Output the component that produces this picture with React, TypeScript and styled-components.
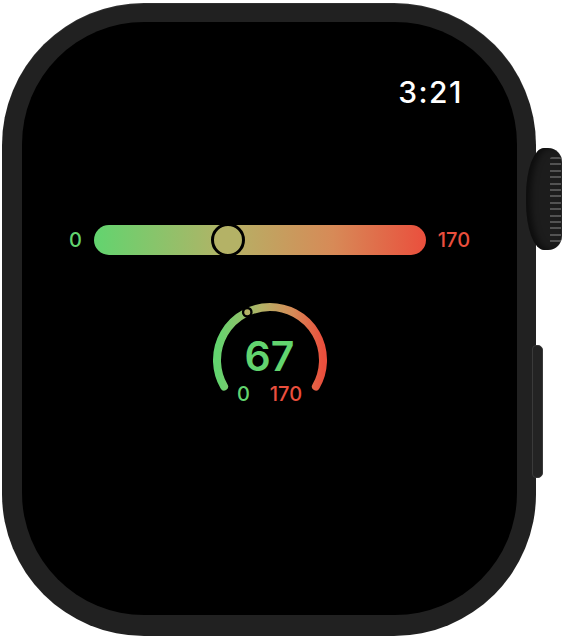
import React from "react";
import styled, { createGlobalStyle } from "styled-components";

const colors = {
  page: "#ffffff",
  bezel: "#212121",
  screen: "#000000",
  crown: "#1c1c1c",
  ridge: "#5c5c5c",
  green: "#62d46f",
  olive: "#b4b266",
  orange: "#d78a57",
  red: "#ea4f3d",
  white: "#ffffff",
};

const MIN = 0;
const MAX = 170;
const VALUE = 67;

const GlobalStyle = createGlobalStyle`
  html, body {
    margin: 0;
    padding: 0;
    background: ${colors.page};
  }
  body {
    font-family: Inter, "Noto Sans", "Liberation Sans", sans-serif;
  }
`;

const Stage = styled.div`
  box-sizing: border-box;
  width: 564px;
  height: 637px;
  padding: 3px 0 0 2px;
`;

const Device = styled.div`
  position: relative;
  width: 534px;
  height: 633px;
`;

const Case = styled.div`
  box-sizing: border-box;
  width: 100%;
  height: 100%;
  padding: 19px 19px 21px 20px;
  background: ${colors.bezel};
  border-radius: 142px;
  box-shadow: inset 0 1px 0 rgba(255, 255, 255, 0.07);
`;

const Screen = styled.div`
  width: 100%;
  height: 100%;
  background: ${colors.screen};
  border-radius: 122px;
  display: flex;
  flex-direction: column;
  align-items: center;
  overflow: hidden;
`;

const Crown = styled.div`
  position: absolute;
  left: 524px;
  top: 145px;
  width: 36px;
  height: 102px;
  background: ${colors.crown};
  border-radius: 18px 14px 14px 18px / 48px 14px 14px 48px;
  box-shadow: inset 5px 0 6px rgba(0, 0, 0, 0.55),
    inset -1px 0 0 rgba(255, 255, 255, 0.05);

  &::after {
    content: "";
    position: absolute;
    right: 1px;
    top: 9px;
    bottom: 5px;
    width: 11px;
    border-radius: 2px;
    background: repeating-linear-gradient(
      to bottom,
      ${colors.ridge} 0 2px,
      transparent 2px 6.4px
    );
    opacity: 0.85;
  }
`;

const SideButton = styled.div`
  position: absolute;
  left: 530px;
  top: 342px;
  box-sizing: border-box;
  width: 11px;
  height: 133px;
  background: #232323;
  border: 1px solid #3a3a3a;
  border-radius: 4px 5px 5px 4px;
`;

const StatusBar = styled.div`
  align-self: stretch;
  display: flex;
  justify-content: flex-end;
  padding: 55px 54px 0 0;
`;

const Clock = styled.span`
  color: ${colors.white};
  font-size: 30px;
  font-weight: 500;
  line-height: 1;
  letter-spacing: 1.5px;
`;

const SliderRow = styled.div`
  margin-top: 116px;
  height: 34px;
  display: flex;
  align-items: center;
  gap: 12px;
`;

const Bound = styled.span<{ $tone: string }>`
  color: ${(p) => p.$tone};
  font-size: 20px;
  font-weight: 500;
  line-height: 1;
`;

const Track = styled.div`
  position: relative;
  width: 332px;
  height: 30px;
  border-radius: 15px;
  background: linear-gradient(
    90deg,
    ${colors.green} 0%,
    ${colors.olive} 40%,
    ${colors.orange} 72%,
    ${colors.red} 100%
  );
`;

const Thumb = styled.div<{ $frac: number }>`
  position: absolute;
  top: 50%;
  left: calc(15px + (100% - 30px) * ${(p) => p.$frac});
  box-sizing: border-box;
  width: 34px;
  height: 34px;
  border: 3px solid #000;
  border-radius: 50%;
  background: ${colors.olive};
  transform: translate(-50%, -50%);
`;

const Gauge = styled.div`
  position: relative;
  margin-top: 43px;
  width: 120px;
  height: 104px;
  display: flex;
  flex-direction: column;
  align-items: center;
`;

const GaugeArt = styled.svg`
  position: absolute;
  inset: 0;
`;

const GaugeValue = styled.span`
  position: relative;
  margin-top: 36px;
  color: ${colors.green};
  font-size: 41px;
  font-weight: 600;
  line-height: 1;
`;

const GaugeBounds = styled.div`
  position: relative;
  margin-top: 7px;
  display: flex;
  gap: 20px;
`;

const CX = 60;
const CY = 60;
const R = 53;

function polar(deg: number) {
  const rad = (deg * Math.PI) / 180;
  return { x: CX + R * Math.cos(rad), y: CY - R * Math.sin(rad) };
}

const GaugeRing: React.FC<{ frac: number }> = ({ frac }) => {
  const start = polar(210);
  const end = polar(-30);
  const dot = polar(210 - frac * 240);
  return (
    <GaugeArt width="120" height="104" viewBox="0 0 120 104">
      <defs>
        <linearGradient id="gaugeGrad" x1="7" y1="0" x2="113" y2="0" gradientUnits="userSpaceOnUse">
          <stop offset="0" stopColor={colors.green} />
          <stop offset="0.42" stopColor={colors.olive} />
          <stop offset="0.72" stopColor={colors.orange} />
          <stop offset="1" stopColor={colors.red} />
        </linearGradient>
      </defs>
      <path
        d={`M ${start.x} ${start.y} A ${R} ${R} 0 1 1 ${end.x} ${end.y}`}
        fill="none"
        stroke="url(#gaugeGrad)"
        strokeWidth="8"
        strokeLinecap="round"
      />
      <circle cx={dot.x} cy={dot.y} r="4.2" fill={colors.olive} stroke="#000" strokeWidth="2.4" />
    </GaugeArt>
  );
};

export default function App() {
  const frac = (VALUE - MIN) / (MAX - MIN);

  return (
    <>
      <GlobalStyle />
      <Stage>
        <Device>
          <Case>
            <Screen>
              <StatusBar>
                <Clock>3:21</Clock>
              </StatusBar>

              <SliderRow>
                <Bound $tone={colors.green}>{MIN}</Bound>
                <Track>
                  <Thumb $frac={frac} />
                </Track>
                <Bound $tone={colors.red}>{MAX}</Bound>
              </SliderRow>

              <Gauge>
                <GaugeRing frac={frac} />
                <GaugeValue>{VALUE}</GaugeValue>
                <GaugeBounds>
                  <Bound $tone={colors.green}>{MIN}</Bound>
                  <Bound $tone={colors.red}>{MAX}</Bound>
                </GaugeBounds>
              </Gauge>
            </Screen>
          </Case>
          <Crown />
          <SideButton />
        </Device>
      </Stage>
    </>
  );
}
